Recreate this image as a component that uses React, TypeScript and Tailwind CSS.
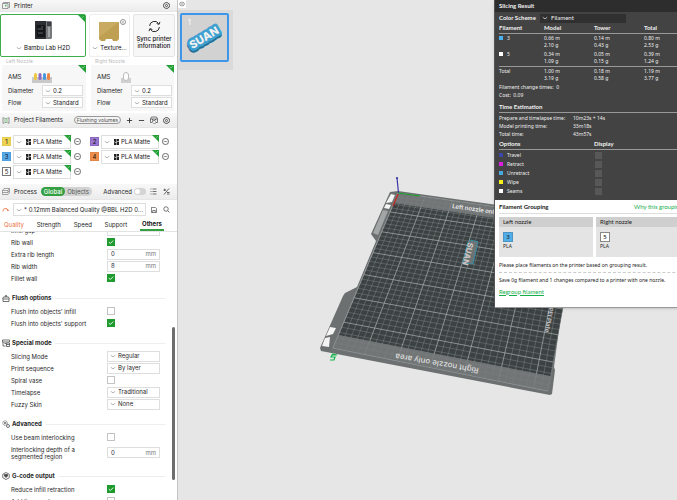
import React, { useId } from "react";

type Pt = [number, number];

const Chevron = ({ className = "text-[#999]" }: { className?: string }) => (
  <svg viewBox="0 0 8 8" className={`h-[6px] w-[6px] shrink-0 ${className}`} fill="none" stroke="currentColor" strokeWidth="1">
    <path d="M1 3 L4 5.2 L7 3" />
  </svg>
);

const GearIcon = () => (
  <svg viewBox="0 0 16 16" className="h-[7px] w-[7px]" fill="none" stroke="#333" strokeWidth="1.8">
    <path d="M5.2 1.5 H10.8 L11.8 3.4 L14 4 L15 8 L14 12 L11.8 12.6 L10.8 14.5 H5.2 L4.2 12.6 L2 12 L1 8 L2 4 L4.2 3.4 Z" />
    <circle cx="8" cy="8" r="2.4" />
  </svg>
);

function Picker({ label, value, className, icon }: { label: string; value: string; className: string; icon?: React.ReactNode }) {
  return (
    <div className={`flex items-center gap-[2px] border border-[#dedede] bg-white pl-[2px] ${className}`}>
      <Chevron />
      {icon}
      <select aria-label={label} className="h-full w-0 min-w-0 flex-1 appearance-none overflow-hidden bg-transparent text-[6px] text-[#1c1c1c] outline-none">
        <option>{value}</option>
      </select>
    </div>
  );
}

function Tick({ id, checked }: { id: string; checked: boolean }) {
  return (
    <span className="grid h-[8px] w-[8px]">
      <input
        id={id}
        type="checkbox"
        defaultChecked={checked}
        className="peer col-start-1 row-start-1 h-[8px] w-[8px] appearance-none border border-[#c4c4c4] bg-white checked:border-[#1f9a2e] checked:bg-[#1f9a2e]"
      />
      <svg viewBox="0 0 8 8" className="pointer-events-none col-start-1 row-start-1 h-[8px] w-[8px] opacity-0 peer-checked:opacity-100" fill="none" stroke="#fff" strokeWidth="0.9">
        <path d="M1.8 4.1 L3.3 5.5 L6.2 2.6" />
      </svg>
    </span>
  );
}

type Field =
  | { kind: "check"; label: string; on: boolean }
  | { kind: "num"; label: string; value: string; tall?: boolean }
  | { kind: "pick"; label: string; value: string };

function FieldRow({ field }: { field: Field }) {
  const id = useId();
  const tall = field.kind === "num" && field.tall;
  return (
    <div className={`flex items-center pl-[11px] ${tall ? "h-[19px]" : "h-[12px]"}`}>
      <label htmlFor={id} className="w-[96px] pr-5 leading-[7px]">{field.label}</label>
      {field.kind === "check" && <Tick id={id} checked={field.on} />}
      {field.kind === "num" && (
        <div className="flex h-[11px] w-[53px] items-center border border-[#dedede] bg-white px-[3px]">
          <input id={id} defaultValue={field.value} className="w-0 min-w-0 flex-1 bg-transparent text-[6px] outline-none" />
          <span className="text-[#777]">mm</span>
        </div>
      )}
      {field.kind === "pick" && (
        <div className="flex h-[11px] w-[53px] items-center gap-[2px] border border-[#dedede] bg-white pl-[2px]">
          <Chevron />
          <select id={id} className="h-full w-0 min-w-0 flex-1 appearance-none bg-transparent text-[6px] outline-none">
            <option>{field.value}</option>
          </select>
        </div>
      )}
    </div>
  );
}

function Section({ title, icon, fields }: { title: string; icon: React.ReactNode; fields: Field[] }) {
  return (
    <section className="mt-[7px]">
      <h3 className="flex h-[14px] items-center gap-[2px] pl-[2px] font-bold text-[#1f1f1f]">
        <svg viewBox="0 0 16 16" className="h-[8px] w-[8px]" fill="none" stroke="#444" strokeWidth="1.5">{icon}</svg>
        {title}
        <span className="ml-[2px] mr-[6px] h-px flex-1 bg-[#eee]" />
      </h3>
      {fields.map((f) => <FieldRow key={f.label} field={f} />)}
    </section>
  );
}

const Corner = ({ className }: { className: string }) => (
  <svg viewBox="0 0 8 8" className={`pointer-events-none absolute top-0 right-0 ${className}`}>
    <path d="M0 0 H8 V8 Z" fill="#22a035" />
    <path d="M4 2 L5 3 L6.8 1.2" fill="none" stroke="#d8f0da" strokeWidth="0.5" />
  </svg>
);

function Filament({ n, color, synced }: { n: number; color: string; synced: boolean }) {
  return (
    <div className="flex h-[15px] items-center">
      <span className={`flex h-[9px] w-[9px] items-center justify-center border text-[6px] text-[#111] ${color}`}>{n}</span>
      <div className="relative ml-[2px]">
        <Picker
          label={`Filament ${n}`}
          value="PLA Matte"
          className="h-[14px] w-[58px]"
          icon={
            <svg viewBox="0 0 10 12" className="ml-[2px] h-[6px] w-[5px]" fill="#222">
              <path d="M0 0 H4.5 V6.5 L0 4.8Z M5.5 0 H10 V3.5 L5.5 5.3Z M0 6 L4.5 7.8 V12 H0Z M5.5 6.6 L10 4.8 V12 H5.5Z" />
            </svg>
          }
        />
        {synced && <Corner className="h-[7px] w-[7px]" />}
      </div>
      <button aria-label={`Filament ${n} options`} className="ml-[3px]">
        <svg viewBox="0 0 16 16" className="h-[7px] w-[7px]" fill="none" stroke="#333" strokeWidth="1.6">
          <circle cx="8" cy="8" r="7" />
          <path d="M4 8 H12" strokeDasharray="2 1" />
        </svg>
      </button>
    </div>
  );
}

function Nozzle({ side, children }: { side: string; children: React.ReactNode }) {
  return (
    <div>
      <p className="pl-[4px] text-[5px] leading-[8px] text-[#bbb]">{side} Nozzle</p>
      <div className="relative flex h-[46px] flex-col gap-px bg-[#f7f7f7] pl-[6px] pt-[5px]">
        <Corner className="h-[8px] w-[8px]" />
        <div className="flex h-[14px] items-center">
          <span className="w-[24px]">AMS</span>
          {children}
        </div>
        {[["Diameter", "0.2"], ["Flow", "Standard"]].map(([l, v]) => (
          <div key={l} className="flex h-[11px] items-center">
            <span className="w-[34px]">{l}</span>
            <Picker label={`${side} ${l}`} value={v} className="h-[11px] w-[41px]" />
          </div>
        ))}
      </div>
    </div>
  );
}

const bar = "flex items-center border-b border-[#e6e6e6] bg-linear-to-b from-[#f8f8f8] to-[#ececec] px-[2px]";

function Sidebar() {
  return (
    <aside className="flex h-full w-[178px] shrink-0 flex-col overflow-hidden border-r border-[#c4c4c4] bg-white text-[6px] leading-[8px] text-[#262626]">
      <header className={`${bar} h-[12px] shrink-0`}>
        <svg viewBox="0 0 16 14" className="h-[7px] w-[8px]" fill="none" stroke="#777" strokeWidth="1.4">
          <path d="M3 3 V1 H15 V11 H13 M1 3 H12 V13 H1Z" />
          <path d="M6 7 H9 M7.5 5.5 V9" stroke="#22a035" />
        </svg>
        <h2 className="ml-[4px] flex-1 text-[#222]">Printer</h2>
        <button aria-label="Printer settings" className="mr-[5px]"><GearIcon /></button>
      </header>

      <div className="mt-[2px] flex h-[43px] shrink-0 gap-[3px] pr-[2px]">
        <button className="relative flex w-[86px] flex-col items-center justify-end rounded-[2px] border border-[#3dae4a] pb-[4px] text-[#111]">
          <Corner className="h-[7px] w-[7px]" />
          <svg viewBox="0 0 17 18" className="mb-[5px] h-[18px] w-[17px] shrink-0">
            <path d="M0 0 H16 L17 1 V17 L16 18 H0Z" fill="#77797c" />
            <path d="M0 0 H11 V18 H0Z" fill="#2c2e33" />
            <path d="M1.5 4 H10 V16 H1.5Z" fill="#14161a" />
            <path d="M2.500 8 H6 M3 12 H8 M7 5 V9" stroke="#5d6168" />
            <path d="M12 1 H16 V5 H12Z" fill="#3b3d42" />
            <path d="M14 6 V16" stroke="#b4b6b8" strokeWidth="1.500" />
          </svg>
          <span className="flex items-center gap-[2px]"><Chevron />Bambu Lab H2D</span>
        </button>
        <button className="flex w-[41px] flex-col items-center justify-end rounded-[2px] border border-[#eee] pb-[4px] text-[#111]">
          <svg viewBox="0 0 34 22" className="mb-[3px] h-[22px] w-[34px] shrink-0">
            <path d="M6 3 H26 V20 L24 22 H20 L19 20 H13 L12 22 H8 L6 20Z" fill="#bfa052" />
            <path d="M6 3 H26 L6 18Z" fill="#c8aa60" />
            <circle cx="30" cy="3" r="2.5" fill="none" stroke="#666" strokeWidth="0.7" />
            <path d="M30 2 V4.4" stroke="#666" strokeWidth="0.7" />
          </svg>
          <span className="flex items-center gap-[2px]"><Chevron />Texture...</span>
        </button>
        <button className="flex flex-1 flex-col items-center rounded-[2px] border border-[#e4e4e4] bg-[#f7f7f7] pt-[5px] leading-[7px] font-medium text-[#111]">
          <svg viewBox="0 0 24 24" className="mb-[2px] h-[13px] w-[13px]" fill="none" stroke="#222" strokeWidth="1.8">
            <path d="M3 11 A9 9 0 0 1 19.5 6.5 M21 13 A9 9 0 0 1 4.5 17.5" />
            <path d="M22 3.500 L20.500 8 L16 6.500 M2 20.500 L3.500 16 L8 17.500" />
          </svg>
          Sync printer information
        </button>
      </div>

      <div className="grid h-[56px] shrink-0 grid-cols-[84px_83px] gap-[5px] pl-[2px]">
        <Nozzle side="Left">
          <svg viewBox="0 0 20 12" className="h-[12px] w-[20px]">
            <path d="M0 6 H20 V12 H0Z" fill="#c9c9c9" />
            <rect x="2" y="2" width="3" height="7" rx="1.500" fill="#edc642" />
            <rect x="6.500" y="2" width="3" height="7" rx="1.500" fill="#8d69c5" />
            <rect x="11" y="2" width="3" height="7" rx="1.500" fill="#4b97de" />
            <rect x="15" y="2" width="3" height="7" rx="1.500" fill="#ef8542" />
          </svg>
        </Nozzle>
        <Nozzle side="Right">
          <svg viewBox="0 0 10 12" className="h-[12px] w-[10px]">
            <path d="M0 7 H10 V12 H0Z" fill="#d0d0d0" />
            <rect x="2.500" y="1.500" width="5" height="8" rx="2.500" fill="#fff" stroke="#bbb" />
          </svg>
        </Nozzle>
      </div>

      <header className={`${bar} h-[15px] shrink-0`}>
        <svg viewBox="0 0 14 14" className="h-[7px] w-[8px]" fill="none" stroke="#777" strokeWidth="1.500">
          <path d="M1 1 V13 M13 1 V13 M1 2 H4 M1 12 H4 M10 2 H13 M10 12 H13" />
          <path d="M5 3 H9 V11 H5Z" stroke="#65a86c" />
        </svg>
        <h2 className="ml-[4px] flex-1 whitespace-nowrap text-[#222]">Project Filaments</h2>
        <button className="rounded-full border border-[#999] px-[2px] text-[5px] leading-[6px] whitespace-nowrap text-[#555]">Flushing volumes</button>
        <button aria-label="Add filament" className="ml-[5px]">
          <svg viewBox="0 0 8 8" className="h-[7px] w-[7px]" stroke="#333"><path d="M4 1 V7 M1 4 H7" /></svg>
        </button>
        <button aria-label="Remove filament" className="ml-[5px]">
          <svg viewBox="0 0 8 8" className="h-[7px] w-[7px]" stroke="#333"><path d="M1 4 H7" /></svg>
        </button>
        <button aria-label="Sync filaments" className="ml-[5px]">
          <svg viewBox="0 0 16 16" className="h-[8px] w-[8px]" fill="none" stroke="#444" strokeWidth="1.400">
            <path d="M1 6 L3 2 H13 L15 6 V13 H11 M1 6 H15 M1 6 V13 H5 M5 6 V9 M11 6 V8" />
            <path d="M5 12 A3 3 0 0 1 11 11 M11 14 A3 3 0 0 1 6 15" />
          </svg>
        </button>
        <button aria-label="Filament settings" className="mr-[5px] ml-[5px]"><GearIcon /></button>
      </header>
      <div className="grid h-[56px] shrink-0 grid-cols-2 content-start gap-x-px pt-[6px] pl-[2px]">
        <Filament n={1} color="border-[#e5cc4c] bg-[#ecd355]" synced />
        <Filament n={2} color="border-[#8d69c5] bg-[#9a78cf]" synced />
        <Filament n={3} color="border-[#4f9fe0] bg-[#58a8e8]" synced />
        <Filament n={4} color="border-[#e58545] bg-[#ee8e4c]" synced />
        <Filament n={5} color="border-[#777] bg-white" synced />
      </div>

      <header className={`${bar} h-[16px] shrink-0`}>
        <svg viewBox="0 0 16 14" className="h-[7px] w-[8px]" fill="none" stroke="#777" strokeWidth="1.300">
          <path d="M4 1 H15 L12 5 H1Z M1 5 V9 H12 V5 M15 1 V5 L12 9 M1 9 V13 H12 L15 9 V5" />
        </svg>
        <h2 className="ml-[4px] text-[#222]">Process</h2>
        <div className="ml-[4px] flex h-[9px] items-center rounded-full bg-[#d2d2d2] text-[#555]">
          <button className="h-[9px] rounded-full bg-[#35a043] px-[3px] font-medium text-white">Global</button>
          <button className="pr-[3px] pl-[2px]">Objects</button>
        </div>
        <label htmlFor="adv" className="ml-auto">Advanced</label>
        <span className="ml-[2px] flex h-[7px] w-[12px] items-center rounded-full bg-[#d4d4d4] px-px">
          <input id="adv" type="checkbox" className="h-[5px] w-[5px] appearance-none rounded-full bg-white" />
        </span>
        <button aria-label="Compare list" className="ml-[4px]">
          <svg viewBox="0 0 14 14" className="h-[7px] w-[7px]" stroke="#444" strokeWidth="1.500"><path d="M1 2 H3 M5 2 H13 M1 7 H3 M5 7 H13 M1 12 H3 M5 12 H13" /></svg>
        </button>
        <button aria-label="Compare presets" className="mr-[5px] ml-[6px]">
          <svg viewBox="0 0 14 14" className="h-[7px] w-[7px]" fill="none" stroke="#333" strokeWidth="1.500"><path d="M2 13 L12 1 M1 4 H6 M3.500 1.500 V6 M8 9 H13 M8 12 H13" /></svg>
        </button>
      </header>
      <div className="flex h-[19px] shrink-0 items-center pl-[2px]">
        <button aria-label="Reset preset">
          <svg viewBox="0 0 14 14" className="h-[7px] w-[7px]" fill="none" stroke="#ee6b3c" strokeWidth="1.600"><path d="M2 11 A5 5 0 1 1 12 9 M9.500 7.500 L12 10 L14 7" /></svg>
        </button>
        <Picker label="Process preset" value="* 0.12mm Balanced Quality @BBL H2D 0..." className="ml-[4px] h-[13px] w-[133px]" />
        <button aria-label="Save preset" className="ml-[5px]">
          <svg viewBox="0 0 14 14" className="h-[6px] w-[6px]" fill="none" stroke="#444" strokeWidth="1.600"><path d="M1 1 H10 L13 4 V13 H1Z M4 13 V8 H10 V13" /></svg>
        </button>
        <button aria-label="Search settings" className="ml-[6px]">
          <svg viewBox="0 0 14 14" className="h-[7px] w-[7px]" fill="none" stroke="#444" strokeWidth="1.400"><circle cx="6" cy="6" r="4.500" /><path d="M9.500 9.500 L13 13" /></svg>
        </button>
      </div>
      <nav className="flex h-[13px] shrink-0 justify-between border-b border-[#e3e3e3] pr-[13px] pl-[4px]">
        <button className="text-[#ee6b3c]">Quality</button>
        <button>Strength</button>
        <button>Speed</button>
        <button>Support</button>
        <button className="border-b-2 border-[#35a043] px-[2px] font-bold text-[#111]">Others</button>
      </nav>

      <div className="flex min-h-0 flex-1">
        <div className="min-w-0 flex-1 overflow-hidden">
          <div className="-mt-[8px]">
            <FieldRow field={{ kind: "num", label: "Infill gap", value: "" }} />
            <FieldRow field={{ kind: "check", label: "Rib wall", on: true }} />
            <FieldRow field={{ kind: "num", label: "Extra rib length", value: "0" }} />
            <FieldRow field={{ kind: "num", label: "Rib width", value: "8" }} />
            <FieldRow field={{ kind: "check", label: "Fillet wall", on: true }} />
            <Section
              title="Flush options"
              icon={<path d="M2 15 H14 V10 H2Z M1 10 L3 6 H13 L15 10 M6 6 L8 2 L10 6" />}
              fields={[
                { kind: "check", label: "Flush into objects' infill", on: false },
                { kind: "check", label: "Flush into objects' support", on: true },
              ]}
            />
            <Section
              title="Special mode"
              icon={<path d="M1 2 H15 V6 H1Z M2 6 V14 H7 M5 9 H8 M9 8 H15 V15 H9Z M9 11 H15" />}
              fields={[
                { kind: "pick", label: "Slicing Mode", value: "Regular" },
                { kind: "pick", label: "Print sequence", value: "By layer" },
                { kind: "check", label: "Spiral vase", on: false },
                { kind: "pick", label: "Timelapse", value: "Traditional" },
                { kind: "pick", label: "Fuzzy Skin", value: "None" },
              ]}
            />
            <Section
              title="Advanced"
              icon={<><circle cx="6" cy="6" r="4.500" strokeDasharray="2 1" /><circle cx="6" cy="6" r="1.500" /><circle cx="12" cy="12" r="3" /></>}
              fields={[
                { kind: "check", label: "Use beam interlocking", on: false },
                { kind: "num", label: "Interlocking depth of a segmented region", value: "0", tall: true },
              ]}
            />
            <Section
              title="G-code output"
              icon={<><path d="M8 1 L14.500 4.500 V11.500 L8 15 L1.500 11.500 V4.500Z" /><path d="M5 5 H11 V8 L8 11 L5 8Z" fill="#444" /></>}
              fields={[
                { kind: "check", label: "Reduce infill retraction", on: true },
                { kind: "check", label: "Add line number", on: false },
              ]}
            />
          </div>
        </div>
        <div className="flex w-[6px] flex-col pl-px">
          <div className="h-[95px]" />
          <div className="h-[153px] w-[3px] rounded-full bg-[#6d6d6d]" />
        </div>
      </div>
    </aside>
  );
}

/* Bed coordinates: u runs along Y (0..320 mm), v runs along X (0..350 mm). */
const TL: Pt = [398, 193];
const TR: Pt = [579, 219];
const BR: Pt = [548, 391];
const BL: Pt = [333, 348];

function makeProjection(): (u: number, v: number) => Pt {
  const dx1 = TR[0] - BR[0], dx2 = BL[0] - BR[0], sx = TL[0] - TR[0] + BR[0] - BL[0];
  const dy1 = TR[1] - BR[1], dy2 = BL[1] - BR[1], sy = TL[1] - TR[1] + BR[1] - BL[1];
  const det = dx1 * dy2 - dx2 * dy1;
  const g = (sx * dy2 - dx2 * sy) / det;
  const h = (dx1 * sy - sx * dy1) / det;
  return (u, v) => {
    const a = u / 320, b = v / 350, w = g * a + h * b + 1;
    return [
      ((TR[0] - TL[0] + g * TR[0]) * a + (BL[0] - TL[0] + h * BL[0]) * b + TL[0]) / w,
      ((TR[1] - TL[1] + g * TR[1]) * a + (BL[1] - TL[1] + h * BL[1]) * b + TL[1]) / w,
    ];
  };
}
const project = makeProjection();
const seg = (u1: number, v1: number, u2: number, v2: number) => {
  const a = project(u1, v1), b = project(u2, v2);
  return `M${a[0].toFixed(2)} ${a[1].toFixed(2)}L${b[0].toFixed(2)} ${b[1].toFixed(2)}`;
};
const quad = (v1: number, v2: number) =>
  [project(0, v1), project(320, v1), project(320, v2), project(0, v2)].map((p) => p.join(",")).join(" ");

let minor = "";
let major = "";
for (let u = 0; u <= 320; u += 10) u % 50 ? (minor += seg(u, 0, u, 350)) : (major += seg(u, 0, u, 350));
for (let v = 0; v <= 350; v += 10) v % 50 ? (minor += seg(0, v, 320, v)) : (major += seg(0, v, 320, v));

function Bed() {
  return (
    <svg viewBox="178 0 500 500" className="absolute top-0 left-0 h-[500px] w-[500px]" fontFamily="Inter, sans-serif">
      <path d="M390 192 L398 191 L582 217 L562 306 L554 367 L555 370 L552 394 L550 395 L321 351 L320 348 L343 296 L345 293 L357 287 L376 241 L371 234Z" fill="#6d7070" />
      <path d="M391 194 L395 195 L392 202 L386 203Z M386 204 L391 205 L389 209 L384 208Z" fill="#f4f4f4" />
      <path d="M383 210 L388 211 L378 235 L373 233Z" fill="#a3a6a6" />
      <path d="M330 327 L336 328 L333 334 L326 336Z M325 338 L330 337 L329 347 L322 346Z" fill="#f4f4f4" />
      <polygon points={quad(0, 350)} fill="#727575" />
      <polygon points={quad(27, 325)} fill="#3c4142" />
      <path d={minor} stroke="#a6adad" strokeOpacity="0.5" strokeWidth="0.6" fill="none" />
      <path d={major} stroke="#a9afaf" strokeOpacity="0.8" strokeWidth="0.9" fill="none" />
      <polygon points={quad(0, 27)} fill="#727575" fillOpacity="0.75" />
      <polygon points={quad(325, 350)} fill="#727575" fillOpacity="0.75" />
      <text x="452" y="208" fontSize="6" fontWeight="600" fill="#eee" transform="rotate(8 452 208)">Left nozzle only area</text>
      <text x="479" y="368" fontSize="8" fontWeight="500" fill="#ddd" transform="rotate(190 479 368)">Right nozzle only area</text>
      <text x="545" y="332" fontSize="6" fontWeight="600" fill="#ccc" textAnchor="end" transform="rotate(99 545 332)">Bambu Textured PEI Plate</text>
      <path d="M397 178 L398.500 193" stroke="#3a35a8" strokeWidth="1.200" />
      <circle cx="397" cy="178" r="1.100" fill="#3a35a8" />
      <path d="M398 193 L420 196" stroke="#18a02b" strokeWidth="1.200" />
      <path d="M398 194 L393 206" stroke="#c6221c" strokeWidth="1.200" />
      <path d="M471 240 L478 242 L473 264 L463 263 L468 242Z" fill="#6b7374" stroke="#2d9ab8" strokeWidth="1" strokeDasharray="2 0.600" />
      <text x="468" y="242" fontSize="8" fontWeight="800" fill="#c9c3c3" transform="rotate(104 468 242)">SUAN</text>
      <path d="M336 355 H332 L331 357 H335 L334 360 H330 M332 354 L337 355" stroke="#12b34a" strokeWidth="1.200" fill="none" />
    </svg>
  );
}

const head = "font-['Lato','Noto_Sans',sans-serif] text-[6px]";
const rule = "border-b border-[#999]";

function Usage({ name, swatch, cells }: { name: string; swatch?: string; cells: string[][] }) {
  return (
    <tr className="align-top leading-[7px]">
      <th scope="row" className="pt-px text-left font-normal">
        <span className="flex items-center">
          {swatch && <span className={`mr-[4px] h-[4px] w-[4px] ${swatch}`} />}
          {name}
        </span>
      </th>
      {cells.map(([a, b]) => (
        <td key={a} className="pt-px pb-px">{a}<br />{b}</td>
      ))}
    </tr>
  );
}

const moves = [
  ["Travel", "bg-[#3a49a8]"],
  ["Retract", "bg-[#e01be0]"],
  ["Unretract", "bg-[#49a9de]"],
  ["Wipe", "bg-[#f7f21a]"],
  ["Seams", "bg-white"],
];

function ResultPanel() {
  return (
    <section className="absolute top-0 -right-[28px] w-[211px] border-l border-[#555] font-['Noto_Sans','Open_Sans',sans-serif] text-[5px] leading-[8px] shadow-sm">
      <div className="bg-[#434343] pb-[4px] text-[#f0f0f0]">
        <h2 className={`h-[12px] bg-[#2d2d2d] pt-[2px] pl-[4px] font-bold ${head}`}>Slicing Result</h2>
        <div className="pl-[4px]">
          <div className={`flex h-[11px] items-center pt-px ${head}`}>
            <label htmlFor="scheme" className="w-[41px] font-bold whitespace-nowrap">Color Scheme</label>
            <div className="flex h-[9px] w-[86px] items-center gap-[3px] bg-[#303030] pl-[2px]">
              <Chevron className="text-[#ddd]" />
              <select id="scheme" className="h-full flex-1 appearance-none bg-transparent leading-[8px] outline-none">
                <option>Filament</option>
              </select>
            </div>
          </div>
          <table className="w-full table-fixed border-collapse">
            <colgroup><col className="w-[45px]" /><col className="w-[50px]" /><col className="w-[50px]" /><col /></colgroup>
            <thead>
              <tr className={`h-[10px] text-left ${head} ${rule}`}>
                <th className="font-bold">Filament</th><th className="font-bold">Model</th><th className="font-bold">Tower</th><th className="font-bold">Total</th>
              </tr>
            </thead>
            <tbody>
              <Usage name="3" swatch="bg-[#49b1ee]" cells={[["0.66 m", "2.10 g"], ["0.14 m", "0.43 g"], ["0.80 m", "2.53 g"]]} />
              <Usage name="5" swatch="bg-white" cells={[["0.34 m", "1.09 g"], ["0.05 m", "0.15 g"], ["0.39 m", "1.24 g"]]} />
            </tbody>
            <tfoot className="border-t border-[#999]">
              <Usage name="Total" cells={[["1.00 m", "3.19 g"], ["0.18 m", "0.58 g"], ["1.19 m", "3.77 g"]]} />
            </tfoot>
          </table>
          <p>Filament change times: &nbsp;0</p>
          <p>Cost: &nbsp;0.09</p>
          <h3 className={`mt-[4px] h-[10px] font-bold ${head} ${rule}`}>Time Estimation</h3>
          <dl className="grid grid-cols-[74px_1fr] pt-px">
            <dt className="whitespace-nowrap">Prepare and timelapse time:</dt><dd>10m23s + 14s</dd>
            <dt>Model printing time:</dt><dd>33m18s</dd>
            <dt>Total time:</dt><dd>43m57s</dd>
          </dl>
          <div className={`mt-[2px] grid h-[10px] grid-cols-[95px_1fr] items-center font-bold ${head} ${rule}`}>
            <span>Options</span><span>Display</span>
          </div>
          <div className="pt-px">
            {moves.map(([name, color]) => (
              <label key={name} className="flex h-[9px] items-center">
                <span className={`mr-[4px] h-[4px] w-[4px] ${color}`} />
                <span className="w-[88px]">{name}</span>
                <input type="checkbox" className="h-[7px] w-[7px] appearance-none bg-[#585858]" />
              </label>
            ))}
          </div>
        </div>
      </div>
      <div className="h-[108px] border-b border-[#999] bg-white pt-[3px] pl-[4px] text-[#222]">
        <div className={`flex h-[11px] justify-between border-b border-[#ddd] ${head}`}>
          <h3 className="font-bold">Filament Grouping</h3>
          <a href="#why" className="w-[71px] whitespace-nowrap text-[#16ae4b]">Why this grouping?</a>
        </div>
        <div className="mt-[3px] grid grid-cols-[94px_94px] gap-[3px]">
          {[["Left", "3", "border-[#4d94c4] bg-[#50aee8]"], ["Right", "5", "border-[#888] bg-white"]].map(([side, n, c]) => (
            <div key={side} className="h-[40px] bg-[#e4e4e4]">
              <h4 className={`h-[10px] bg-[#cfcfcf] pt-px pl-[4px] ${head}`}>{side} nozzle</h4>
              <div className="px-[4px] pt-[5px]">
                <span className={`flex h-[10px] w-[10px] items-center justify-center border text-[6px] font-medium ${c}`}>{n}</span>
                PLA
              </div>
            </div>
          ))}
        </div>
        <p className="mt-[4px] whitespace-nowrap">Please place filaments on the printer based on grouping result.</p>
        <p className="mt-[3px] border-t border-dashed border-[#ccc] pt-[3px] whitespace-nowrap">Save 0g filament and 1 changes compared to a printer with one nozzle.</p>
        <a href="#regroup" className={`mt-[4px] inline-block text-[#16ae4b] underline ${head}`}>Regroup filament</a>
      </div>
    </section>
  );
}

export default function App() {
  return (
    <div className="flex h-screen overflow-hidden bg-[#e6e6e6] font-['Inter','Liberation_Sans',sans-serif]">
      <Sidebar />
      <main className="relative min-w-0 flex-1 overflow-hidden">
        <Bed />
        <button aria-label="Collapse sidebar" className="relative flex h-[8px] w-[8px] items-center justify-center bg-white">
          <svg viewBox="0 0 12 12" className="h-[6px] w-[6px]" fill="none" stroke="#555" strokeWidth="1.300"><path d="M4 2 L1 6 L4 10 M8 2 L11 6 L8 10 M6 1 V11" /></svg>
        </button>
        <div className="relative mt-[2px] h-[60px] w-[55px] bg-[#dadada] pt-[3px] pl-[2px]">
          <button className="relative block h-[49px] w-[49px] rounded-[2px] border-2 border-[#3c97ea] bg-[#d2d2d2]">
            <span className="absolute top-[4px] left-[6px] text-[7px] leading-[8px] text-white">1</span>
            <svg viewBox="0 0 45 45" className="h-[45px] w-[45px]">
              <g fontFamily="Inter, sans-serif" fontSize="11" fontWeight="800" textAnchor="middle" strokeLinejoin="round">
                <text x="24" y="28" transform="rotate(-31 24 28)" fill="#246f98" stroke="#246f98" strokeWidth="5">SUAN</text>
                <text x="24" y="26" transform="rotate(-31 24 26)" fill="#3da0d0" stroke="#3da0d0" strokeWidth="5">SUAN</text>
                <text x="24" y="26" transform="rotate(-31 24 26)" fill="#f1f1f1">SUAN</text>
              </g>
            </svg>
          </button>
        </div>
        <ResultPanel />
      </main>
    </div>
  );
}
